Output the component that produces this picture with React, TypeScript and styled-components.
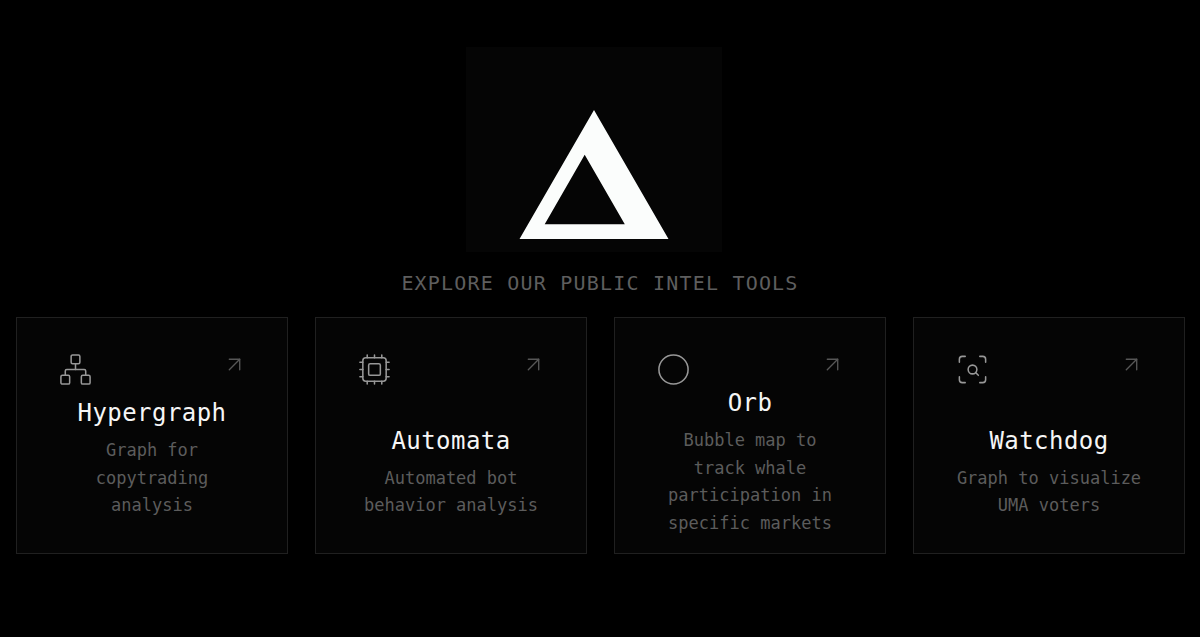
import styled, { createGlobalStyle } from 'styled-components';
import { ArrowUpRight, Circle, Cpu, Network, ScanSearch } from 'lucide-react';
import type { LucideIcon } from 'lucide-react';

interface Tool {
  name: string;
  lines: string[];
  icon: LucideIcon;
}

const TOOLS: Tool[] = [
  { name: 'Hypergraph', lines: ['Graph for', 'copytrading', 'analysis'], icon: Network },
  { name: 'Automata', lines: ['Automated bot', 'behavior analysis'], icon: Cpu },
  {
    name: 'Orb',
    lines: ['Bubble map to', 'track whale', 'participation in', 'specific markets'],
    icon: Circle,
  },
  { name: 'Watchdog', lines: ['Graph to visualize', 'UMA voters'], icon: ScanSearch },
];

const ToolCard = ({ name, lines, icon: Icon }: Tool) => {
  return (
    <Card>
      <CardHead>
        <Icon size={35} strokeWidth={1.05} color="#989898" />
        <ArrowUpRight size={25} strokeWidth={1.3} color="#575757" />
      </CardHead>
      <CardBody>
        <CardTitle>{name}</CardTitle>
        <CardText>
          {lines.map((line) => (
            <span key={line}>{line}</span>
          ))}
        </CardText>
      </CardBody>
    </Card>
  );
};

const App = () => {
  return (
    <Page>
      <GlobalStyle />
      <LogoBox>
        <svg width="150" height="130" viewBox="0 0 150 130" fill="#fbfdfc">
          <path
            fillRule="evenodd"
            d="M75 0 L149.5 129 H0.5 Z M65.7 44.8 L25.7 114.2 H105.8 Z"
          />
        </svg>
      </LogoBox>
      <Heading>EXPLORE OUR PUBLIC INTEL TOOLS</Heading>
      <CardList>
        {TOOLS.map((tool) => (
          <ToolCard key={tool.name} {...tool} />
        ))}
      </CardList>
    </Page>
  );
};

export default App;

const GlobalStyle = createGlobalStyle`
  * {
    box-sizing: border-box;
  }
  body {
    margin: 0;
    background: #000;
  }
`;

const Page = styled.main`
  display: flex;
  flex-direction: column;
  align-items: center;
  width: 1200px;
  height: 637px;
  padding-top: 47px;
  overflow: hidden;
  background: #000;
  font-family: 'DejaVu Sans Mono', 'Liberation Mono', monospace;
`;

const LogoBox = styled.div`
  display: flex;
  align-items: flex-end;
  justify-content: center;
  width: 256px;
  height: 205px;
  margin-right: 12px;
  padding-bottom: 12px;
  background: #050505;
  svg {
    display: block;
  }
`;

const Heading = styled.h1`
  margin: 18px 0 0;
  font-size: 20px;
  font-weight: 400;
  line-height: 27px;
  letter-spacing: 1.2px;
  color: #5e5e5e;
`;

const CardList = styled.section`
  display: grid;
  grid-template-columns: repeat(4, 272px);
  column-gap: 27px;
  margin: 20px 0 0 1px;
`;

const Card = styled.article`
  display: flex;
  flex-direction: column;
  justify-content: space-between;
  height: 237px;
  padding: 34px 40px 33px 41px;
  border: 1px solid #202020;
  background: #050505;
`;

const CardHead = styled.div`
  display: flex;
  flex-shrink: 0;
  align-items: flex-start;
  justify-content: space-between;
  height: 35px;
`;

const CardBody = styled.div`
  display: flex;
  flex-direction: column;
  flex-shrink: 0;
  align-items: center;
  gap: 8px;
  margin-right: 1px;
`;

const CardTitle = styled.h2`
  margin: 0;
  font-size: 24px;
  font-weight: 400;
  line-height: 32px;
  letter-spacing: 0.45px;
  color: #f6f6f6;
`;

const CardText = styled.p`
  display: flex;
  flex-direction: column;
  align-items: center;
  margin: 0;
  font-size: 17px;
  line-height: 27.6px;
  white-space: nowrap;
  color: #5c5c5c;
`;
